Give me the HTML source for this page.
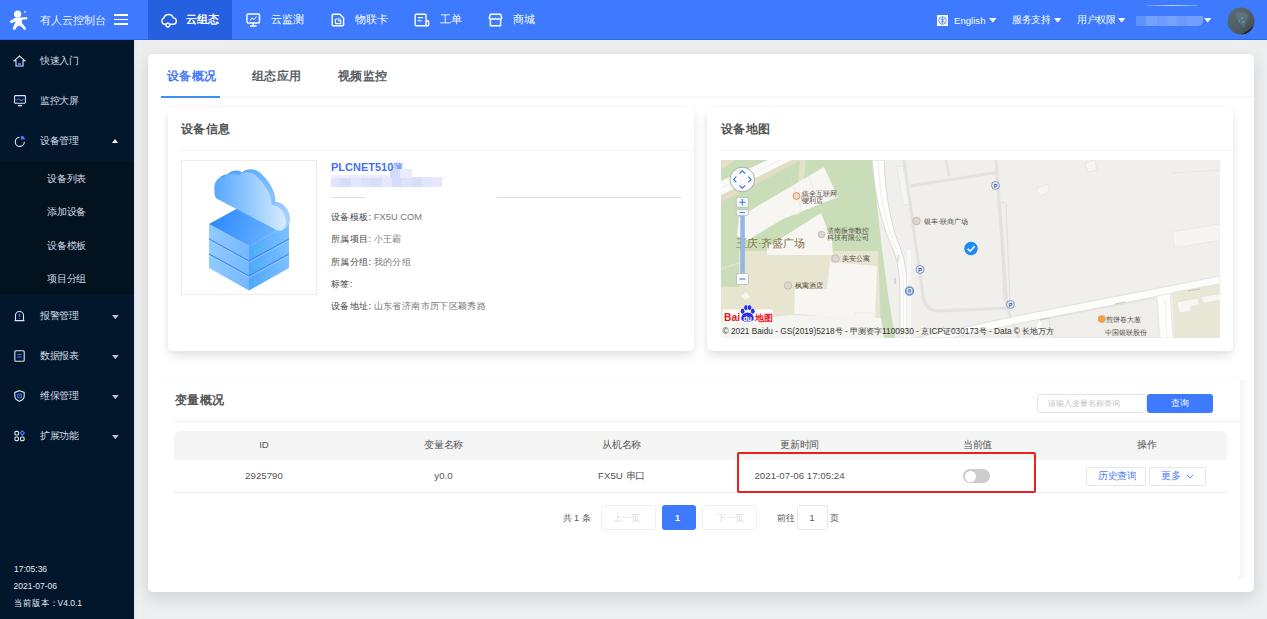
<!DOCTYPE html>
<html><head><meta charset="utf-8">
<style>
*{margin:0;padding:0;box-sizing:border-box}
html,body{width:1267px;height:619px;overflow:hidden;background:#edeef0;font-family:"Liberation Sans",sans-serif;color:#333}
.a{position:absolute;white-space:nowrap}
#hdr{position:absolute;left:0;top:0;width:1267px;height:40px;background:#3d7afd;z-index:5}
#side{position:absolute;left:0;top:40px;width:134px;height:579px;background:#02172c}
.sm{font-size:10px;color:#d5dbe3;line-height:12px;transform:scale(.96);transform-origin:0 0}
.nav{font-size:11px;color:#fff;line-height:14px}
.th{top:439px;text-align:center;font-size:10px;color:#555;line-height:12px;transform:scale(.97);transform-origin:50% 0}
.td{top:470px;text-align:center;font-size:10px;color:#555;line-height:12px;transform:scale(.97);transform-origin:50% 0}
.pg{font-size:9px;color:#555;line-height:12px}
.card{position:absolute;background:#fff;border-radius:5px}
</style></head><body>
<div id="hdr">
  <div class="a" style="left:0;top:39px;width:1267px;height:1px;background:#2a68e6"></div>
  <!-- logo -->
  <svg class="a" style="left:0;top:0" width="40" height="40" viewBox="0 0 40 40">
    <circle cx="17.6" cy="14.2" r="3.6" fill="#fff"/>
    <circle cx="24.9" cy="11.9" r="1.1" fill="#b5c9f5"/>
    <path d="M9.6 21.4 L14.8 17.9 L27.2 17 L27.2 19.2 L21.8 19.7 L22 23 Q24.5 26 26.4 28.9 L24.2 29.9 Q21.8 26 19.2 25.4 Q16.6 26.2 14.9 29.9 L12.6 29.3 Q13.8 25 15.8 21.6 L11 23.3 Z" fill="#fff"/>
  </svg>
  <div class="a nav" style="left:40px;top:13px;font-size:10.8px;color:#eef2fd">有人云控制台</div>
  <div class="a" style="left:114px;top:14.2px;width:14px;height:1.5px;background:#fff"></div>
  <div class="a" style="left:114px;top:18.6px;width:14px;height:1.5px;background:#fff"></div>
  <div class="a" style="left:114px;top:23px;width:14px;height:1.5px;background:#fff"></div>

  <div class="a" style="left:148px;top:0;width:84px;height:40px;background:#2560e0"></div>
  <svg class="a" style="left:161px;top:13px" width="16" height="15" viewBox="0 0 16 15" fill="none" stroke="#fff" stroke-width="1.4">
    <path d="M4.9 11.2 H3.8 A3.2 3.2 0 0 1 2.8 5.1 A5 5 0 0 1 12.3 4.9 A3.2 3.2 0 0 1 12.9 11.2 H8.7"/>
    <circle cx="6.8" cy="12.1" r="1.9"/>
  </svg>
  <div class="a nav" style="left:186px;top:11.5px;font-weight:bold">云组态</div>

  <svg class="a" style="left:246px;top:13px" width="15" height="14" viewBox="0 0 15 14" fill="none" stroke="#fff" stroke-width="1.4">
    <rect x="1" y="1" width="12.5" height="9" rx="1"/>
    <path d="M7.25 10 V13 M4 13 H10.5"/>
    <path d="M4 7.5 L6 5 L8 6.5 L10.5 3.5" stroke-width="1"/>
  </svg>
  <div class="a nav" style="left:271px;top:11.5px">云监测</div>

  <svg class="a" style="left:331px;top:13px" width="14" height="14" viewBox="0 0 14 14" fill="none" stroke="#fff" stroke-width="1.4">
    <path d="M2.4 1.2 H8.8 L12.6 4.8 V11.6 Q12.6 12.8 11.4 12.8 H2.4 Q1.2 12.8 1.2 11.6 V2.4 Q1.2 1.2 2.4 1.2 Z" stroke-linejoin="round"/>
    <path d="M9.8 6 H5.4 Q4.4 6 4.4 7 V9.6 Q4.4 10.6 5.4 10.6 H9.8 V7.8 H7" stroke-width="1.1"/>
  </svg>
  <div class="a nav" style="left:355px;top:11.5px">物联卡</div>

  <svg class="a" style="left:414px;top:13px" width="16" height="14" viewBox="0 0 16 14" fill="none" stroke="#fff" stroke-width="1.4">
    <path d="M12 8 V2.4 Q12 1.2 10.8 1.2 H2.4 Q1.2 1.2 1.2 2.4 V11.6 Q1.2 12.8 2.4 12.8 H13.6 Q14.6 12.8 14.6 11.8 V8 H12 V12.6" stroke-linejoin="round"/>
    <path d="M3.8 4.6 H9 M3.8 7.6 H7.5"/>
  </svg>
  <div class="a nav" style="left:439.5px;top:11.5px">工单</div>

  <svg class="a" style="left:488px;top:13px" width="15" height="14" viewBox="0 0 15 14" fill="none" stroke="#fff" stroke-width="1.4">
    <path d="M1.2 5.2 L2.4 1.2 H12.6 L13.8 5.2 Q12.6 7 10.6 5.5 Q9 7 7.5 5.5 Q6 7 4.4 5.5 Q2.4 7 1.2 5.2 Z"/>
    <path d="M2.4 6.6 V12.8 H12.6 V6.6"/>
  </svg>
  <div class="a nav" style="left:513px;top:11.5px">商城</div>

  <!-- right -->
  <div class="a" style="left:937px;top:15px;width:11px;height:11px;background:#fff"></div>
  <svg class="a" style="left:937px;top:15px" width="11" height="11" viewBox="0 0 11 11" fill="none" stroke="#3e7bfb" stroke-width=".8">
    <circle cx="5.5" cy="5.5" r="3.8"/><path d="M3.5 4.5 H7.5 M3.5 6.5 H7.5 M5.5 2 V9"/>
  </svg>
  <div class="a" style="left:954px;top:14.8px;font-size:9.6px;color:#f8faff;line-height:12px">English</div>
  <svg class="a" style="left:989px;top:18.3px" width="8" height="5" viewBox="0 0 8 5"><path d="M0 0 H7.6 L3.8 4.6 Z" fill="#fff"/></svg>
  <div class="a" style="left:1012px;top:14px;font-size:10px;color:#f8faff;line-height:12px;transform:scale(.95);transform-origin:0 0">服务支持</div>
  <svg class="a" style="left:1054px;top:18.3px" width="8" height="5" viewBox="0 0 8 5"><path d="M0 0 H7.4 L3.7 4.5 Z" fill="#fff"/></svg>
  <div class="a" style="left:1076.5px;top:14px;font-size:10px;color:#f8faff;line-height:12px;transform:scale(.95);transform-origin:0 0">用户权限</div>
  <svg class="a" style="left:1118px;top:18.3px" width="8" height="5" viewBox="0 0 8 5"><path d="M0 0 H7.4 L3.7 4.5 Z" fill="#fff"/></svg>
  <div class="a" style="left:1136px;top:15.7px;width:10px;height:10px;background:#5f92fb"></div>
  <div class="a" style="left:1146px;top:15.7px;width:10.5px;height:10px;background:#77a2fc"></div>
  <div class="a" style="left:1156.5px;top:15.7px;width:10px;height:10px;background:#6f9cfc"></div>
  <div class="a" style="left:1166.5px;top:15.7px;width:10.5px;height:10px;background:#78a3fc"></div>
  <div class="a" style="left:1177px;top:15.7px;width:10px;height:10px;background:#6d9bfc"></div>
  <div class="a" style="left:1187px;top:15.7px;width:16px;height:10px;background:#73a0fc;border-radius:0 0 5px 0"></div>
  <div class="a" style="left:1147px;top:5px;width:50px;height:1px;background:linear-gradient(90deg,rgba(200,218,253,.3),rgba(200,218,253,.9) 50%,rgba(200,218,253,.4))"></div>
  <svg class="a" style="left:1203.8px;top:18px" width="8" height="5" viewBox="0 0 8 5"><path d="M0 0 H7.4 L3.7 4.6 Z" fill="#fff"/></svg>
  <svg class="a" style="left:1226.5px;top:7px" width="28" height="28" viewBox="0 0 28 28">
    <defs><linearGradient id="av" x1="0" y1="0" x2="1" y2="1"><stop offset="0" stop-color="#5d6e76"/><stop offset=".6" stop-color="#4e5c63"/><stop offset="1" stop-color="#3a4247"/></linearGradient>
    <clipPath id="avc"><circle cx="14" cy="14" r="13.5"/></clipPath></defs>
    <circle cx="14" cy="14" r="13.5" fill="url(#av)"/>
    <g clip-path="url(#avc)">
      <path d="M14 28 Q21 24 28 18 V28 Z" fill="#1d2023"/>
      <path d="M8 6 Q15 3 21 8 Q20 14 17 21 Q11 16 8 6 Z" fill="#71858c" opacity=".45"/>
      <circle cx="15" cy="11" r="1.3" fill="#2aa6c9"/><circle cx="12" cy="14" r="1" fill="#2aa6c9"/><circle cx="16.5" cy="15" r="1" fill="#3ab0d0"/>
    </g>
  </svg>
</div>

<div id="side">
  <div class="a" style="left:0;top:121px;width:134px;height:134px;background:#02121f"></div>
  <!-- home -->
  <svg class="a" style="left:13px;top:15px" width="13" height="12" viewBox="0 0 13 12" fill="none" stroke="#dfe5ee" stroke-width="1.1">
    <path d="M1 5.8 L6.5 1 L12 5.8 H10 V11 H3 V5.8 Z"/>
    <rect x="5" y="8" width="3" height="2.5" fill="#3f7bfb" stroke="none"/>
  </svg>
  <div class="a sm" style="left:40px;top:15px">快速入门</div>
  <svg class="a" style="left:14px;top:55px" width="12" height="12" viewBox="0 0 12 12" fill="none" stroke="#dfe5ee" stroke-width="1.1">
    <rect x=".6" y=".6" width="10.8" height="7.6" rx=".6"/>
    <path d="M2.5 5.5 Q4 3 6 4.8 T9.5 3.8" stroke="#3f7bfb"/>
    <path d="M4 10.6 H8" stroke-width="1.4"/>
  </svg>
  <div class="a sm" style="left:40px;top:55px">监控大屏</div>
  <svg class="a" style="left:14px;top:95px" width="12" height="12" viewBox="0 0 12 12" fill="none" stroke="#dfe5ee" stroke-width="1.1">
    <path d="M5.4 2.4 A4.5 4.5 0 1 0 10.3 6.8"/>
    <path d="M6.9 .7 A3.9 3.9 0 0 1 10.8 4.6 H6.9 Z" fill="#3f7bfb" stroke="none"/>
  </svg>
  <div class="a sm" style="left:40px;top:95px">设备管理</div>
  <div class="a" style="left:112px;top:98.5px;width:0;height:0;border-left:3.5px solid transparent;border-right:3.5px solid transparent;border-bottom:4.3px solid #fff"></div>

  <div class="a sm" style="left:47px;top:132.5px;transform:scale(.975)">设备列表</div>
  <div class="a sm" style="left:47px;top:166px;transform:scale(.975)">添加设备</div>
  <div class="a sm" style="left:47px;top:199.5px;transform:scale(.975)">设备模板</div>
  <div class="a sm" style="left:47px;top:233px;transform:scale(.975)">项目分组</div>

  <svg class="a" style="left:14px;top:270px" width="11" height="12" viewBox="0 0 11 12" fill="none" stroke="#dfe5ee" stroke-width="1.1">
    <path d="M1.5 10.5 V5.5 A4 4 0 0 1 9.5 5.5 V10.5 Z M.5 10.8 H10.5"/>
    <path d="M5.5 3.5 V7 M5.5 8 V8.8" stroke="#3f7bfb" stroke-width="1.2"/>
  </svg>
  <div class="a sm" style="left:40px;top:270px">报警管理</div>
  <svg class="a" style="left:14px;top:310px" width="11" height="12" viewBox="0 0 11 12" fill="none" stroke="#dfe5ee" stroke-width="1.1">
    <rect x=".8" y=".8" width="9.4" height="10.4" rx="1"/>
    <path d="M3.3 4.5 H7.7 M3.3 7 H7.7" stroke="#3f7bfb"/>
  </svg>
  <div class="a sm" style="left:40px;top:310px">数据报表</div>
  <svg class="a" style="left:14px;top:350px" width="11" height="12" viewBox="0 0 11 12" fill="none" stroke="#dfe5ee" stroke-width="1.1">
    <path d="M5.5 .7 L10.2 2.5 V6 Q10.2 9.5 5.5 11.3 Q.8 9.5 .8 6 V2.5 Z"/>
    <circle cx="5.5" cy="5.8" r="2.1" fill="none" stroke="#3f7bfb" stroke-width="1.1"/><path d="M5.5 4.8 V5.9 H6.5" stroke="#3f7bfb" stroke-width=".7"/>
  </svg>
  <div class="a sm" style="left:40px;top:350px">维保管理</div>
  <svg class="a" style="left:14px;top:390px" width="11" height="12" viewBox="0 0 11 12" fill="none" stroke="#dfe5ee" stroke-width="1.1">
    <rect x=".9" y="1.4" width="3.6" height="3.6" rx="1"/><rect x=".9" y="7" width="3.6" height="3.6" rx="1"/><rect x="6.5" y="7" width="3.6" height="3.6" rx="1"/>
    <path d="M8.3 .9 L10.4 3 L8.3 5.1 L6.2 3 Z" stroke="#3f7bfb"/>
  </svg>
  <div class="a sm" style="left:40px;top:390px">扩展功能</div>
  <svg class="a" style="left:112px;top:274.7px" width="7" height="5" viewBox="0 0 7 5"><path d="M0 0 H6.8 L3.4 4.2 Z" fill="#b9bec6"/></svg>
  <svg class="a" style="left:112px;top:314.7px" width="7" height="5" viewBox="0 0 7 5"><path d="M0 0 H6.8 L3.4 4.2 Z" fill="#b9bec6"/></svg>
  <svg class="a" style="left:112px;top:354.7px" width="7" height="5" viewBox="0 0 7 5"><path d="M0 0 H6.8 L3.4 4.2 Z" fill="#b9bec6"/></svg>
  <svg class="a" style="left:112px;top:394.7px" width="7" height="5" viewBox="0 0 7 5"><path d="M0 0 H6.8 L3.4 4.2 Z" fill="#b9bec6"/></svg>

  <div class="a" style="left:14px;top:523.3px;font-size:8.5px;color:#e6eaf0;line-height:10px;transform:scaleY(1.15);transform-origin:0 0">17:05:36</div>
  <div class="a" style="left:13.5px;top:540.3px;font-size:8.5px;color:#e6eaf0;line-height:10px;transform:scaleY(1.15);transform-origin:0 0">2021-07-06</div>
  <div class="a" style="left:13.5px;top:557px;font-size:8.5px;color:#e6eaf0;line-height:10px;transform:scaleY(1.1);transform-origin:0 0">当前版本：<span style="margin-left:-1px">V4.0.1</span></div>
</div>

<div id="main">
  <div class="a" style="left:134px;top:40px;width:3px;height:579px;background:linear-gradient(90deg,#e2e4e8,#eceef1)"></div>
  <div class="card" style="left:148px;top:54px;width:1106px;height:538px;box-shadow:0 5px 16px rgba(0,0,0,.13)"></div>
  <!-- tabs -->
  <div class="a" style="left:166.5px;top:68.5px;font-size:12px;transform:scale(1.025);transform-origin:0 0;font-weight:bold;color:#4a7bf7;line-height:15px">设备概况</div>
  <div class="a" style="left:252px;top:68.5px;font-size:12px;transform:scale(1.025);transform-origin:0 0;font-weight:bold;color:#5a5e66;line-height:15px">组态应用</div>
  <div class="a" style="left:337.5px;top:68.5px;font-size:12px;transform:scale(1.025);transform-origin:0 0;font-weight:bold;color:#5a5e66;line-height:15px">视频监控</div>
  <div class="a" style="left:161px;top:96px;width:1093px;height:2px;background:#f5f7fb"></div>
  <div class="a" style="left:161px;top:96px;width:59px;height:2px;background:#3d8ff7"></div>

  <!-- device info card -->
  <div class="card" style="left:167.5px;top:107px;width:526px;height:244px;box-shadow:0 6px 12px -2px rgba(0,0,0,.13), 0 0 6px rgba(0,0,0,.04)"></div>
  <div class="a" style="left:181px;top:121.5px;font-size:12px;transform:scale(1.025);transform-origin:0 0;font-weight:bold;color:#555;line-height:15px">设备信息</div>
  <div class="a" style="left:181px;top:149.5px;width:513px;height:1.5px;background:#f3f4f8"></div>
  <div class="a" style="left:181px;top:160px;width:136px;height:135px;border:1px solid #ececec"></div>
  <svg class="a" style="left:181px;top:160px" width="136" height="135" viewBox="181 160 136 135">
    <defs>
      <linearGradient id="gl" gradientUnits="userSpaceOnUse" x1="209" y1="0" x2="249" y2="0"><stop offset="0" stop-color="#93cbff"/><stop offset="1" stop-color="#74b8ff"/></linearGradient>
      <linearGradient id="gr" gradientUnits="userSpaceOnUse" x1="249" y1="0" x2="289" y2="0"><stop offset="0" stop-color="#4fa6ff"/><stop offset="1" stop-color="#7dc0ff"/></linearGradient>
      <linearGradient id="gt" gradientUnits="userSpaceOnUse" x1="210" y1="215" x2="280" y2="235"><stop offset="0" stop-color="#2a87ff"/><stop offset="1" stop-color="#6fb7ff"/></linearGradient>
      <linearGradient id="gc" gradientUnits="userSpaceOnUse" x1="214" y1="0" x2="286" y2="0"><stop offset="0" stop-color="#55a7ff"/><stop offset=".5" stop-color="#93caff"/><stop offset="1" stop-color="#d8ebff"/></linearGradient>
      <linearGradient id="gce" gradientUnits="userSpaceOnUse" x1="214" y1="0" x2="290" y2="0"><stop offset="0" stop-color="#3f98ff"/><stop offset=".6" stop-color="#6fb5ff"/><stop offset="1" stop-color="#acd6ff"/></linearGradient>
    </defs>
    <path d="M209 224 L249 246 V290.5 L209 268 Z" fill="url(#gl)"/>
    <path d="M249 246 L289 224 V268 L249 290.5 Z" fill="url(#gr)"/>
    <g fill="none" stroke="#3d8cf2" stroke-width="1.3">
      <path d="M209 239 L249 261 L289 239"/>
      <path d="M209 254 L249 276 L289 254"/>
    </g>
    <g fill="none" stroke="#b5dcff" stroke-width=".6">
      <path d="M209 240.3 L249 262.3 L289 240.3"/>
      <path d="M209 255.3 L249 277.3 L289 255.3"/>
    </g>
    <path d="M209 224 L249 202 L289 224 L249 246 Z" fill="url(#gt)"/>
    <g fill="#3fe08a">
      <circle cx="255.5" cy="251.5" r="1.1"/><circle cx="259.5" cy="249.3" r="1.1"/><circle cx="263.5" cy="247" r="1.1"/>
      <circle cx="255.5" cy="266.5" r="1.1"/><circle cx="259.5" cy="264.3" r="1.1"/>
      <circle cx="255.5" cy="282.5" r="1.1"/><circle cx="263.5" cy="278" r="1.1"/>
    </g>
    <defs><path id="cl" d="M214.5 191 C213.5 183 217 177 223.5 177.5 C227.5 173 234 172.5 238 175.5 C243 170.5 253 171 258.5 178 C266 185 272 196 271.5 205 C279.5 205 286 213 286 222 C286 229 281 232.5 276.5 230 L216.5 198.5 C214.8 197 214.5 194 214.5 191 Z"/></defs>
    <use href="#cl" transform="translate(4,-3)" fill="url(#gce)"/>
    <use href="#cl" transform="translate(3,-2.25)" fill="url(#gce)"/>
    <use href="#cl" transform="translate(2,-1.5)" fill="url(#gce)"/>
    <use href="#cl" transform="translate(1,-0.75)" fill="url(#gce)"/>
    <use href="#cl" fill="url(#gc)"/>
  </svg>
  <div class="a" style="z-index:2;left:331px;top:160.8px;font-size:11.4px;font-weight:bold;color:#4373f3;line-height:13px;transform:scaleX(.965);transform-origin:0 0">PLCNET510</div>
  <div class="a" style="left:392.5px;top:160.5px;font-size:10px;font-weight:bold;color:#7da2f8;line-height:13px">薄</div><div class="a" style="left:331.0px;top:177px;width:10.3px;height:10px;background:#dfe4fb"></div><div class="a" style="left:341.1px;top:177px;width:10.3px;height:10px;background:#d8defa"></div><div class="a" style="left:351.2px;top:177px;width:10.3px;height:10px;background:#e4e8fc"></div><div class="a" style="left:361.3px;top:177px;width:10.3px;height:10px;background:#dce2fb"></div><div class="a" style="left:371.4px;top:177px;width:10.3px;height:10px;background:#d9dffa"></div><div class="a" style="left:381.5px;top:177px;width:10.3px;height:10px;background:#e6e9fc"></div><div class="a" style="left:391.6px;top:177px;width:10.3px;height:10px;background:#d6dcfa"></div><div class="a" style="left:401.7px;top:177px;width:10.3px;height:10px;background:#dde3fb"></div><div class="a" style="left:411.8px;top:177px;width:10.3px;height:10px;background:#d8defa"></div><div class="a" style="left:421.9px;top:177px;width:10.3px;height:10px;background:#e2e6fc"></div><div class="a" style="left:432.0px;top:177px;width:10.3px;height:10px;background:#e6e9fc"></div><div class="a" style="left:331px;top:174.5px;width:58px;height:3px;background:linear-gradient(90deg,#eef1fd,#e6eafc);border-radius:3px 6px 0 0"></div><div class="a" style="left:389.5px;top:169px;width:10.5px;height:8.5px;background:#d5dcfa"></div><div class="a" style="left:400px;top:169px;width:11.5px;height:8.5px;background:#e8ecfd"></div>
  <div class="a" style="left:331px;top:196.5px;width:350px;height:1px;background:#dcdcdc"></div>
  <div class="a" style="left:365px;top:196px;width:132px;height:7px;background:#fff;border-radius:0 0 30px 10px;opacity:.92"></div>

  <div class="a" style="left:331px;top:211px;font-size:9px;color:#444;line-height:12px;transform:scale(1.041);transform-origin:0 0">设备模板: <span style="color:#777">FX5U COM</span></div>
  <div class="a" style="left:331px;top:233.3px;font-size:9px;color:#444;line-height:12px;transform:scale(1.041);transform-origin:0 0">所属项目: <span style="color:#777">小王霸</span></div>
  <div class="a" style="left:331px;top:255.6px;font-size:9px;color:#444;line-height:12px;transform:scale(1.041);transform-origin:0 0">所属分组: <span style="color:#777">我的分组</span></div>
  <div class="a" style="left:331px;top:277.9px;font-size:9px;color:#444;line-height:12px;transform:scale(1.041);transform-origin:0 0">标签:</div>
  <div class="a" style="left:331px;top:300.2px;font-size:9px;color:#444;line-height:12px;transform:scale(1.041);transform-origin:0 0">设备地址: <span style="color:#777">山东省济南市历下区颖秀路</span></div>

  <!-- map card -->
  <div class="card" style="left:707px;top:107px;width:526px;height:244px;box-shadow:0 6px 12px -2px rgba(0,0,0,.13), 0 0 6px rgba(0,0,0,.04)"></div>
  <div class="a" style="left:721px;top:121.5px;font-size:12px;transform:scale(1.025);transform-origin:0 0;font-weight:bold;color:#555;line-height:15px">设备地图</div>
  <div class="a" style="left:721px;top:149.5px;width:512px;height:1.5px;background:#f3f4f8"></div>
  <div class="a" id="map" style="left:721px;top:160px;width:499px;height:178px;background:#f0efeb;overflow:hidden">
  <svg width="499" height="178" viewBox="721 160 499 178" style="position:absolute;left:0;top:0;font-family:'Liberation Sans',sans-serif">
    <!-- green left area -->
    <path d="M721 160 H873 Q880 250 895 338 H721 Z" fill="#c9ddb8"/>
    <!-- khaki top-left corner & strip -->
    <path d="M721 160 H735 L721 170 Z" fill="#e3dfc8"/>
    <path d="M721 194 L793 160 H802 L721 202 Z" fill="#e2dec6"/>
    <!-- diagonal road top-left -->
    <path d="M721 181 L768 160 H792 L721 195 Z" fill="#fbfbf9"/>
    <path d="M721 188 L781 160" stroke="#e6e6e2" stroke-width=".6" fill="none"/>
    <!-- vertical tan strip -->
    <path d="M800 160 H806 L800 214 L795 216 Z" fill="#e6e1c9"/>
    <!-- khaki lower-left -->
    <path d="M739 251 H878 L881 326 H721 V287 H739 Z" fill="#e7e4d0"/>
    <path d="M721 268 L739 262 V264 L721 270 Z" fill="#e3e0cc"/>
    <!-- buildings -->
    <path d="M739 217 L824 167 L838 197 L783 219 L748 240 L737 236 Z" fill="#f7f6f2"/>
    <path d="M790 176 L803 214 M806 170 L820 205" stroke="#dcdcd6" stroke-width=".5"/>
    <path d="M767 247 L821 213 L832 241 L833 255 H767 Z" fill="#f7f6f2"/>
    <path d="M830 262 L877 266 L875 321 L794 313.5 L795 289 L827 289 Z" fill="#f7f6f2"/>
    <path d="M855 313 H874 V320 H855 Z" fill="none" stroke="#e2e2dc" stroke-width=".5"/>
    <path d="M741 296 L746 292 L750 297 L745 300 Z" fill="#f7f6f2"/>
    <!-- main road -->
    <path d="M872 160 H884 Q886 215 901 250 Q907 265 907 290 V338 H900 V292 Q900 268 894 252 Q876 215 872 160 Z" fill="#fdfdfc" stroke="#d2d2ce" stroke-width=".8"/>
    <path d="M878 160 Q880 215 897.5 251 Q903.5 266 903.5 291 V338" stroke="#e0e0dc" stroke-width=".5" fill="none"/>
    <path d="M907 250 V338 H911 V250 Z" fill="#f7f7f5"/>
    <!-- right side blocks -->
    <path d="M904 160 L923 296 Q925 311 940 311 L1007 308 L996 160" fill="none" stroke="#e2e2de" stroke-width="3.2"/>
    <path d="M910 186 L996 172.5" fill="none" stroke="#e2e2de" stroke-width="3.2"/>
    <path d="M946 160 L949 176" fill="none" stroke="#e2e2de" stroke-width="3"/>
    <path d="M1000 204 Q1003 200 1006 204 L1010 300 Q1008 306 1004 300 Z" fill="none" stroke="#e0e0dc" stroke-width="1"/>
    <path d="M1007 308 L1019 338" fill="none" stroke="#e2e2de" stroke-width="3"/>
    <path d="M897 167 L903 166 L909 204 L903 205 Z" fill="#f4f4f1" stroke="#e0e0dc" stroke-width=".6"/>
    <path d="M1172 173 L1220 170 V160" stroke="#e5e4e0" stroke-width="1" fill="none"/>
    <path d="M1172 232 L1220 224 V240 L1175 248 Z" fill="#f6f5f2" stroke="#e5e4df" stroke-width=".6"/>
    <path d="M1036 189 L1047 184 L1050 191 L1040 196 Z" fill="#f6f5f2" stroke="#dedcd6" stroke-width=".5"/>
    <path d="M1085 163 L1095 160 L1097 170 L1088 172 Z" fill="#f6f5f2" stroke="#dedcd6" stroke-width=".5"/>
    <!-- diagonal road bottom right -->
    <path d="M915 338 L1016 316 L1220 276 V284 L1016 324 L950 338 Z" fill="#fdfdfc" stroke="#d8d8d4" stroke-width=".7"/>
    <path d="M1050 326 Q1047 318 1056 317 L1150 299 Q1157 298 1158 305 L1160 338 H1054 Z" fill="#efeeea" stroke="#dcdcd7" stroke-width=".7"/>
    <path d="M1157 296 L1170 293.5 L1173 338 H1160 Z" fill="#fdfdfc" stroke="#dcdcd8" stroke-width=".5"/>
    <path d="M1165 300 L1167 338" stroke="#e6e6e2" stroke-width=".5"/>
    <path d="M1172 292 L1222 283 V338 H1174 Z" fill="#e9e7d5"/>
    <path d="M1177 302 L1198 298 L1199 305 L1190 307 L1191 311 L1179 313 Z" fill="#f7f6f2" stroke="#dcdad0" stroke-width=".4"/>
    <path d="M1201 297 L1222 293.5 V300 L1203 303 Z" fill="#f7f6f2" stroke="#dcdad0" stroke-width=".4"/>
    <path d="M1036 338 L1040 322" stroke="#fdfdfc" stroke-width="3"/>
    <!-- arrows -->
    <path d="M1050 318 L1040 320 M1115 304 L1125 302 M1188 291 L1200 289" stroke="#9a9a9a" stroke-width=".5"/>
    <path d="M898 255 V262 M895 278 V284" stroke="#888" stroke-width=".5"/>
    <!-- markers -->
    <circle cx="971" cy="248.5" r="6.8" fill="#1f8bf5"/>
    <path d="M967.6 248.8 L970.2 251.2 L974.6 246.2" stroke="#fff" stroke-width="1.6" fill="none"/>
    <g fill="#dfe6f2" stroke="#5b7fb8" stroke-width=".7">
      <circle cx="995.5" cy="185.5" r="4"/><circle cx="1010.5" cy="304.5" r="4"/>
      <circle cx="920" cy="269.5" r="4"/>
    </g>
    <g font-size="5.5" fill="#3b5d9a" font-weight="bold" text-anchor="middle">
      <text x="995.5" y="187.5">P</text><text x="1010.5" y="306.5">P</text><text x="920" y="271.5">P</text>
    </g>
    <circle cx="909.5" cy="291" r="4.3" fill="#7c9fd6" stroke="#4a6fb0" stroke-width=".7"/><rect x="907.3" y="288.6" width="4.4" height="4.6" rx=".6" fill="none" stroke="#fff" stroke-width=".8"/>
    <!-- POI icons -->
    <g fill="#ddd6d0" stroke="#a89a90" stroke-width=".5">
      <circle cx="916.5" cy="221" r="3.8"/><circle cx="805" cy="198" r="3.8"/><circle cx="835.5" cy="258.5" r="3.8"/><circle cx="788" cy="285.5" r="3.8"/><circle cx="821.5" cy="234.5" r="3.3"/>
      <circle cx="1102" cy="319" r="3.6"/>
    </g>
    <circle cx="796.5" cy="196" r="3.5" fill="#f3d8c0" stroke="#d67a3a" stroke-width=".7"/>
    <circle cx="1101.5" cy="319" r="3.5" fill="#f0a040"/>
    <g font-size="7" fill="#55504a">
      <text x="802" y="196">倍全互联网</text><text x="802" y="203">便利店</text>
      <text x="827" y="233">济南振华数控</text><text x="827" y="240">科技有限公司</text>
      <text x="842" y="261">美安公寓</text>
      <text x="795" y="288">枫寓酒店</text>
      <text x="924" y="224">银丰·联商广场</text>
      <text x="1106" y="322">煎饼卷大葱</text>
      <text x="1105" y="335">中国银联股份</text>
    </g>
    <text x="736" y="247" font-size="10.5" fill="#8a7348">王庆·齐盛广场</text>
    <!-- nav control -->
    <circle cx="742.3" cy="179.5" r="12.3" fill="#fbfbfb" stroke="#9a9a9a" stroke-width=".8"/>
    <path d="M739.5 173.5 L742.3 170.8 L745.1 173.5 M739.5 185.5 L742.3 188.2 L745.1 185.5 M736.3 176.7 L733.6 179.5 L736.3 182.3 M748.3 176.7 L751 179.5 L748.3 182.3" stroke="#3c78e0" stroke-width="1.2" fill="none"/>
    <rect x="736.3" y="197.4" width="12" height="9.8" rx="1.5" fill="#fafafa" stroke="#a9a9a9" stroke-width=".6"/>
    <path d="M739 202.3 H745.6 M742.3 199 V205.6" stroke="#3c78e0" stroke-width="1.1"/>
    <rect x="740.7" y="213" width="3.8" height="61" fill="#8fb8f2" stroke="#a0a8b8" stroke-width=".5"/>
    <rect x="736.3" y="209.8" width="12" height="5.6" rx="1.5" fill="#fafafa" stroke="#a9a9a9" stroke-width=".6"/>
    <path d="M739.5 212.6 H745.1" stroke="#3c78e0" stroke-width="1"/>
    <rect x="736.5" y="273.5" width="12" height="11" rx="1.5" fill="#fafafa" stroke="#a9a9a9" stroke-width=".6"/>
    <path d="M739.5 279 H745.5" stroke="#3c78e0" stroke-width="1.1"/>
    <!-- bottom strip -->
    <path d="M721 323 L790 315 L881 318 L884 338 H721 Z" fill="#f4f4f1"/>
    <!-- baidu logo -->
    <rect x="722.5" y="309.5" width="50.5" height="13.5" rx="2" fill="#fff"/>
    <text x="724" y="321" font-size="11.5" font-weight="bold" fill="#e6141d" textLength="16" lengthAdjust="spacingAndGlyphs">Bai</text>
    <g fill="#2932e1" stroke="#fff" stroke-width="1" paint-order="stroke">
      <path d="M741.2 318.5 Q741.5 313.2 747.5 312.6 Q753.5 313.2 753.8 318.5 Q753.8 321.8 747.5 321.6 Q741.2 321.8 741.2 318.5 Z"/>
      <ellipse cx="742.6" cy="311.2" rx="1.9" ry="2.6"/><ellipse cx="746" cy="307.6" rx="1.9" ry="2.6"/><ellipse cx="749.6" cy="307.6" rx="1.9" ry="2.6"/><ellipse cx="752.8" cy="311.2" rx="1.9" ry="2.6"/>
    </g>
    <text x="743.2" y="320.8" font-size="6.8" font-weight="bold" fill="#fff" textLength="8.6" lengthAdjust="spacingAndGlyphs">du</text>
    <text x="755" y="321" font-size="8.5" font-weight="bold" fill="#e6141d">地图</text>
    <text x="722.5" y="334" font-size="8.3" fill="#333">© 2021 Baidu - GS(2019)5218号 - 甲测资字1100930 - 京ICP证030173号 - Data © 长地万方</text>
  </svg>
</div>

  <!-- variables card -->
  <div class="a" style="left:1238px;top:380px;width:12px;height:198px;background:linear-gradient(90deg,rgba(0,0,0,.045),rgba(0,0,0,0));border-radius:0 0 6px 0"></div>
  <div class="a" style="left:160px;top:374px;width:1080px;height:4px;background:linear-gradient(0deg,rgba(0,0,0,.02),rgba(0,0,0,0))"></div>
  <div class="card" style="left:160px;top:377px;width:1080px;height:201px"></div>
  <div class="a" style="left:174.5px;top:392.5px;font-size:12px;transform:scale(1.025);transform-origin:0 0;font-weight:bold;color:#555;line-height:15px">变量概况</div>
  <div class="a" style="left:174px;top:421px;width:1066px;height:1px;background:#eef0f4"></div>
  <div class="a" style="left:1037px;top:394px;width:110px;height:19px;border:1px solid #e2e4ea;border-radius:3px;background:#fff"></div>
  <div class="a" style="left:1048px;top:398.5px;font-size:8px;color:#c0c4cc;line-height:10px">请输入变量名称查询</div>
  <div class="a" style="left:1146.5px;top:394px;width:66.5px;height:19px;background:#3d7afd;border-radius:3px"></div>
  <div class="a" style="left:1170.5px;top:398.2px;font-size:10px;color:#fff;line-height:12px;transform:scale(.92);transform-origin:0 0">查询</div>

  <div class="a" style="left:174px;top:431px;width:1053px;height:29px;background:#f5f5f6;border-radius:6px 6px 0 0"></div>
  <div class="a" style="left:174px;top:492px;width:1053px;height:1px;background:#ebeef5"></div>
  <div class="a th" style="left:174px;width:180px">ID</div>
  <div class="a th" style="left:354px;width:179px">变量名称</div>
  <div class="a th" style="left:532px;width:179px">从机名称</div>
  <div class="a th" style="left:710px;width:179px">更新时间</div>
  <div class="a th" style="left:888px;width:179px">当前值</div>
  <div class="a th" style="left:1066px;width:161px">操作</div>
  <div class="a td" style="left:174px;width:180px">2925790</div>
  <div class="a td" style="left:354px;width:179px">y0.0</div>
  <div class="a td" style="left:532px;width:179px">FX5U 串口</div>
  <div class="a td" style="left:710px;width:179px">2021-07-06 17:05:24</div>
  <div class="a" style="left:963px;top:469px;width:27px;height:14px;border-radius:7px;background:#cccccc"></div>
  <div class="a" style="left:964.5px;top:470.5px;width:11px;height:11px;border-radius:50%;background:#fff"></div>
  <div class="a" style="left:736.5px;top:452.3px;width:299.5px;height:41.2px;border:2px solid #ec1f1f;border-radius:2px"></div>
  <div class="a" style="left:1086px;top:466.5px;width:60px;height:19px;border:1px solid #e4e7ed;border-radius:2px"></div>
  <div class="a" style="left:1097.5px;top:470px;font-size:10px;color:#4a7bf5;line-height:12px;transform:scale(.95);transform-origin:0 0">历史查询</div>
  <div class="a" style="left:1149px;top:466.5px;width:57px;height:19px;border:1px solid #e4e7ed;border-radius:2px"></div>
  <div class="a" style="left:1160.5px;top:470px;font-size:10px;color:#4a7bf5;line-height:12px;transform:scale(.95);transform-origin:0 0">更多</div>
  <svg class="a" style="left:1186px;top:474px" width="8" height="5" viewBox="0 0 8 5" fill="none" stroke="#4a7bf5" stroke-width=".9"><path d="M.8 .8 L4 4 L7.2 .8"/></svg>

  <!-- pagination -->
  <div class="a pg" style="left:562.5px;top:512px">共 1 条</div>
  <div class="a" style="left:600.5px;top:505px;width:55px;height:25px;border:1px solid #eef0f3;border-radius:3px"></div>
  <div class="a pg" style="left:613px;top:512px;color:#d8dade">上一页</div>
  <div class="a" style="left:662px;top:505px;width:33.5px;height:25px;background:#3d7afd;border-radius:3px"></div>
  <div class="a pg" style="left:675px;top:512px;color:#fff;font-weight:bold">1</div>
  <div class="a" style="left:702px;top:505px;width:55px;height:25px;border:1px solid #eef0f3;border-radius:3px"></div>
  <div class="a pg" style="left:717px;top:512px;color:#d8dade">下一页</div>
  <div class="a pg" style="left:777px;top:512px">前往</div>
  <div class="a" style="left:797px;top:505px;width:31px;height:25px;border:1px solid #e4e7ed;border-radius:3px"></div>
  <div class="a pg" style="left:809.5px;top:512px">1</div>
  <div class="a pg" style="left:830px;top:512px">页</div>
</div>
</body></html>
